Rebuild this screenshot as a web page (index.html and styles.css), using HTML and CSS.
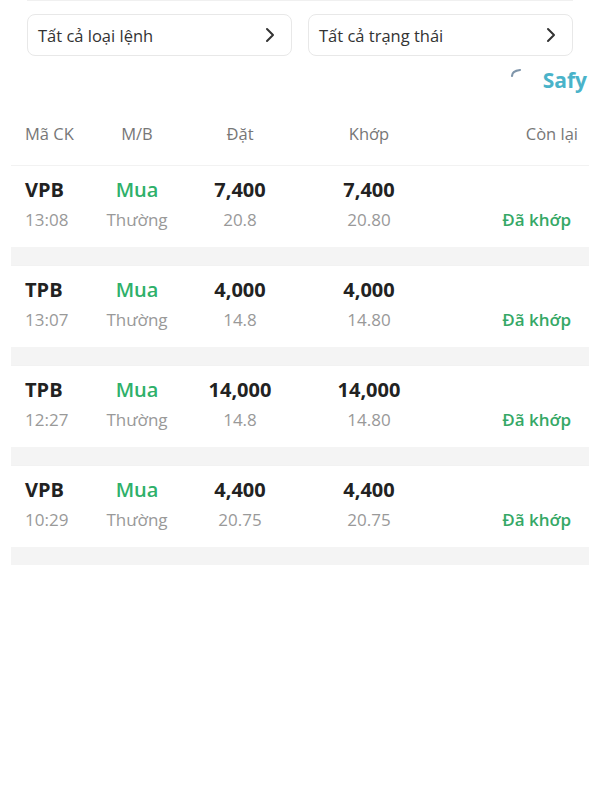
FILE: index.html
```html
<!DOCTYPE html>
<html lang="vi">
<head>
    <meta charset="UTF-8">
    <meta name="viewport" content="width=device-width, initial-scale=1.0">
    <title>Sổ lệnh</title>
    <link rel="stylesheet" href="styles.css">
</head>
<body>
    <div class="top-edge"></div>

    <!-- Bộ lọc -->
    <div class="filters">
        <button class="filter">
            <span>Tất cả loại lệnh</span>
            <svg width="10" height="16" viewBox="0 0 10 16"><path d="M2 2l6 6-6 6" fill="none" stroke="#333" stroke-width="2" stroke-linecap="round" stroke-linejoin="round"/></svg>
        </button>
        <button class="filter">
            <span>Tất cả trạng thái</span>
            <svg width="10" height="16" viewBox="0 0 10 16"><path d="M2 2l6 6-6 6" fill="none" stroke="#333" stroke-width="2" stroke-linecap="round" stroke-linejoin="round"/></svg>
        </button>
    </div>

    <div class="brand-row">
        <svg class="spinner" width="16" height="12" viewBox="0 0 16 12"><path d="M3 9 Q3 4 11 3" fill="none" stroke="#7f95aa" stroke-width="2.2" stroke-linecap="round"/></svg>
        <span class="brand">Safy</span>
    </div>

    <!-- Tiêu đề bảng -->
    <div class="grid head">
        <div class="c1">Mã CK</div>
        <div class="c2">M/B</div>
        <div class="c3">Đặt</div>
        <div class="c4">Khớp</div>
        <div class="c5">Còn lại</div>
    </div>

    <div class="orders" id="orders"></div>

    <script>
        const orders = [
            { code: "VPB", time: "13:08", qty: "7,400", price: "20.8", mqty: "7,400", mprice: "20.80" },
            { code: "TPB", time: "13:07", qty: "4,000", price: "14.8", mqty: "4,000", mprice: "14.80" },
            { code: "TPB", time: "12:27", qty: "14,000", price: "14.8", mqty: "14,000", mprice: "14.80" },
            { code: "VPB", time: "10:29", qty: "4,400", price: "20.75", mqty: "4,400", mprice: "20.75" }
        ];

        let list = document.getElementById("orders");
        orders.forEach(o => {
            let row = document.createElement("div");
            row.classList.add("order");
            row.innerHTML = `
                <div class="grid">
                    <div class="c1"><div class="big">${o.code}</div><div class="small">${o.time}</div></div>
                    <div class="c2"><div class="big green">Mua</div><div class="small">Thường</div></div>
                    <div class="c3"><div class="big">${o.qty}</div><div class="small">${o.price}</div></div>
                    <div class="c4"><div class="big">${o.mqty}</div><div class="small">${o.mprice}</div></div>
                    <div class="c5"><div class="big">&nbsp;</div><div class="small status">Đã khớp</div></div>
                </div>
            `;
            list.appendChild(row);
        });
    </script>
</body>
</html>
```

FILE: styles.css
```css
body {
    margin: 0;
    padding: 0;
    background: #fff;
    font-family: "Open Sans", Arial, sans-serif;
    color: #222;
}
.top-edge {
    height: 1px;
    margin: 0 27px;
    background: #f0f0f0;
}

/* bộ lọc */
.filters {
    display: flex;
    gap: 16px;
    padding: 13px 27px 0 27px;
}
.filter {
    flex: 1;
    height: 42px;
    display: flex;
    align-items: center;
    justify-content: space-between;
    padding: 0 16px 0 10px;
    background: #fff;
    border: 1px solid #e8e8e8;
    border-radius: 8px;
    font-family: inherit;
    font-size: 16.5px;
    color: #333;
}

.brand-row {
    height: 44px;
    display: flex;
    align-items: center;
    justify-content: flex-end;
    padding-right: 13px;
    padding-top: 4px;
    box-sizing: border-box;
}
.spinner {
    margin-right: 18px;
    margin-top: -14px;
}
.brand {
    font-size: 21px;
    font-weight: 700;
    color: #4ab3c9;
}

/* bảng */
.grid {
    display: grid;
    grid-template-columns: 70px 84px 122px 136px 141px;
    padding-left: 14px;
}
.c2, .c3, .c4 {
    text-align: center;
}
.c5 {
    text-align: right;
}
.head {
    height: 65px;
    align-items: center;
    padding-top: 2px;
    box-sizing: border-box;
    margin: 0 11px;
    font-size: 16.5px;
    color: #777;
}

.orders {
    margin: 0 11px;
}
.order {
    background: #fff;
    border-top: 1px solid #f2f2f2;
    box-sizing: border-box;
    padding-top: 11px;
    border-bottom: 18px solid #f4f4f4;
    height: 100px;
}
.big {
    font-size: 20px;
    font-weight: 700;
    line-height: 26px;
    color: #222;
}
.big.green {
    color: #2fb06a;
    font-weight: 600;
}
.small {
    font-size: 17px;
    line-height: 24px;
    margin-top: 5px;
    color: #999;
}
.status {
    color: #35a866;
    font-weight: 600;
    padding-right: 7px;
}
```
